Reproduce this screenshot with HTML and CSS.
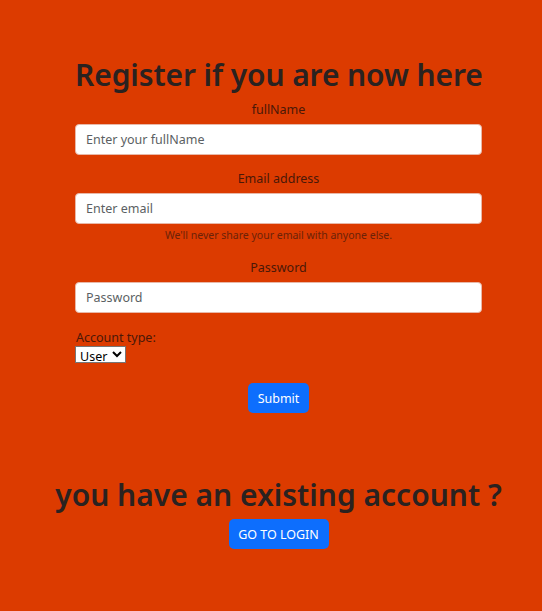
FILE: index.html
```html
<!DOCTYPE html>
<html>
<head>
<meta charset="utf-8">
<link rel="stylesheet" href="styles.css">
</head>
<body>
<main class="page">
  <form class="register">
    <h1 class="title">Register if you are now here</h1>
    <div class="field">
      <label class="label">fullName</label>
      <input class="control" type="text" placeholder="Enter your fullName">
    </div>
    <div class="field">
      <label class="label">Email address</label>
      <input class="control" type="email" placeholder="Enter email">
      <small class="help">We'll never share your email with anyone else.</small>
    </div>
    <div class="field">
      <label class="label">Password</label>
      <input class="control" type="password" placeholder="Password">
    </div>
    <div class="account">
      <label class="account-label">Account type:</label>
      <select class="select"><option>User</option><option>Admin</option></select>
    </div>
    <button class="btn submit" type="button">Submit</button>
  </form>
  <section class="existing">
    <h2 class="title2">you have an existing account ?</h2>
    <button class="btn login" type="button">GO TO LOGIN</button>
  </section>
</main>
</body>
</html>
```
FILE: styles.css
```css
html, body {
  margin: 0;
  padding: 0;
  background: #dc3b00;
  height: 100%;
}
body {
  font-family: "Noto Sans", "Open Sans", sans-serif;
  color: #212529;
}
.page {
  width: 407px;
  margin-left: 75px;
  padding-top: 54px;
  display: flex;
  flex-direction: column;
}
.register {
  display: flex;
  flex-direction: column;
  align-items: stretch;
}
.title {
  margin: 0 0 5px;
  font-size: 30px;
  font-weight: 600;
  line-height: 42px;
  text-align: center;
  color: #2a2220;
  white-space: nowrap;
  letter-spacing: -0.1px;
}
.field {
  display: flex;
  flex-direction: column;
  align-items: center;
  margin-bottom: 15px;
}
.label {
  font-size: 12.5px;
  line-height: 18px;
  color: #4a1808;
  margin-bottom: 5px;
}
.control {
  box-sizing: border-box;
  width: 100%;
  height: 31px;
  border: 1px solid #e8b8a8;
  border-radius: 4px;
  background: #fff;
  padding: 0 10px;
  font-family: inherit;
  font-size: 12.5px;
  color: #212529;
}
.control::placeholder {
  color: #5b5f63;
}
.help {
  margin-top: 4px;
  font-size: 10.5px;
  line-height: 14px;
  color: #6b2208;
  margin-bottom: 2px;
}
.account {
  display: flex;
  flex-direction: column;
  align-items: flex-start;
  margin-top: 2px;
}
.account-label {
  font-size: 12.5px;
  line-height: 16px;
  color: #4a1808;
  padding-left: 1px;
}
.select {
  box-sizing: border-box;
  height: 17px;
  width: 51px;
  font-size: 12.5px;
  font-family: inherit;
  padding: 0;
  border: 1px solid #767676;
  border-radius: 0;
  background: #fff;
  color: #000;
}
.btn {
  align-self: center;
  border: none;
  border-radius: 5px;
  background: #0d6efd;
  color: #fff;
  font-family: inherit;
  font-size: 12.5px;
  height: 30px;
  padding: 0;
  white-space: nowrap;
}
.submit {
  margin-top: 20px;
  width: 61px;
}
.existing {
  display: flex;
  flex-direction: column;
  align-items: center;
  margin-top: 62px;
}
.title2 {
  margin: 0;
  font-size: 30px;
  font-weight: 600;
  line-height: 40px;
  color: #2a2220;
  white-space: nowrap;
}
.login {
  margin-top: 4px;
  width: 100px;
}
```
